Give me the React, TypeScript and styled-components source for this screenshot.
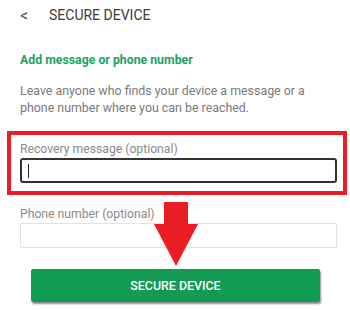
import React from "react";
import styled, { createGlobalStyle } from "styled-components";

const GlobalStyle = createGlobalStyle`
  body {
    margin: 0;
    background: #ffffff;
    font-family: Roboto, "Liberation Sans", Arial, sans-serif;
  }
`;

const App: React.FunctionComponent = () => {
  return (
    <>
      <GlobalStyle />
      <Page>
        <Header>
          <Back>&lt;</Back>
          <Title>SECURE DEVICE</Title>
        </Header>
        <Heading>Add message or phone number</Heading>
        <Description>
          Leave anyone who finds your device a message or a phone number where
          you can be reached.
        </Description>
        <Field highlighted>
          <Label>Recovery message (optional)</Label>
          <Input focused>
            <Caret />
          </Input>
        </Field>
        <Field>
          <Label>Phone number (optional)</Label>
          <Input />
        </Field>
        <Button>SECURE DEVICE</Button>
        <Arrow width="46" height="66" viewBox="0 0 46 66">
          <path d="M11 0 H35 V22 H45 L23 64 L1 22 H11 Z" fill="#ec1c24" />
        </Arrow>
      </Page>
    </>
  );
};

export default App;

const Page = styled.div`
  position: relative;
  width: 350px;
  height: 310px;
  box-sizing: border-box;
  padding: 0 13px 0 20px;
  overflow: hidden;
`;

const Header = styled.div`
  display: flex;
  align-items: center;
  height: 30px;
  color: #3c3c3c;
  font-size: 14px;
`;

const Back = styled.span`
  width: 29px;
  color: #555;
  font-size: 16px;
`;

const Title = styled.span`
  letter-spacing: 0;
`;

const Heading = styled.div`
  margin-top: 22px;
  font-size: 12.3px;
  line-height: 16px;
  font-weight: 700;
  color: #1da25f;
`;

const Description = styled.p`
  margin: 14px 0 0;
  font-size: 12.4px;
  line-height: 17px;
  color: #7a7a7a;
`;

const Field = styled.div<{ highlighted?: boolean }>`
  position: relative;
  margin-top: ${(p) => (p.highlighted ? "25px" : "23px")};

  ${(p) =>
    p.highlighted &&
    `
    &::before {
      content: "";
      position: absolute;
      top: -10px;
      left: -13px;
      right: -10px;
      bottom: -12px;
      border: 4px solid #ec1c24;
      pointer-events: none;
    }
  `}
`;

const Label = styled.div`
  font-size: 12.2px;
  line-height: 16px;
  color: #8a8a8a;
  margin-bottom: 1px;
`;

const Input = styled.div<{ focused?: boolean }>`
  display: flex;
  align-items: center;
  box-sizing: border-box;
  height: 25px;
  padding: 0 6px;
  border: ${(p) => (p.focused ? "2px solid #333" : "1px solid #e2e2e2")};
  border-radius: ${(p) => (p.focused ? "3px" : "1px")};
  background: #fff;
`;

const Caret = styled.span`
  display: block;
  width: 1px;
  height: 14px;
  background: #222;
`;

const Button = styled.div`
  display: flex;
  align-items: center;
  justify-content: center;
  width: 289px;
  height: 33px;
  margin: 21px 0 0 11px;
  background: #139a55;
  color: #fff;
  font-size: 12.4px;
  font-weight: 500;
  border-radius: 2px;
  box-shadow: 1px 2px 2px rgba(0, 0, 0, 0.45);
`;

const Arrow = styled.svg`
  position: absolute;
  left: 153px;
  top: 202px;
`;
